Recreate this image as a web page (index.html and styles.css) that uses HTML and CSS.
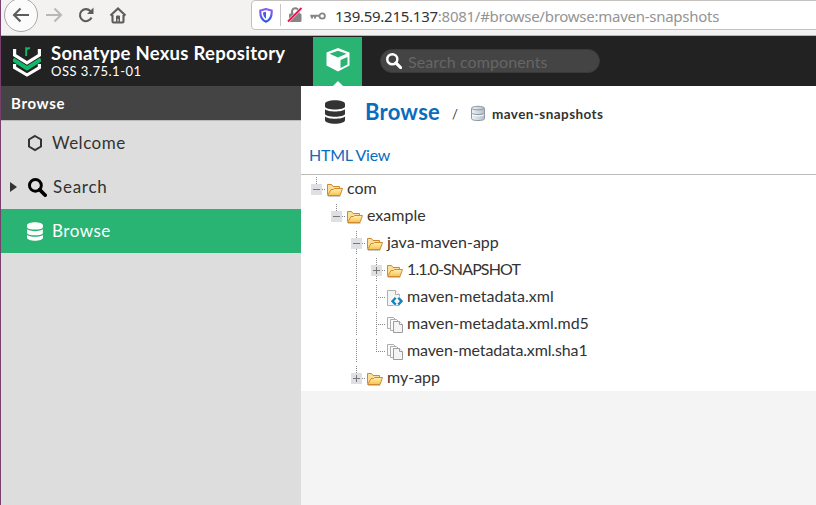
FILE: index.html
```html
<!DOCTYPE html>
<html lang="en">
<head>
<meta charset="utf-8">
<title>Browse - Sonatype Nexus Repository</title>
<link rel="stylesheet" href="styles.css">
</head>
<body>
<svg width="0" height="0" class="defs" aria-hidden="true">
  <defs>
    <linearGradient id="gold" x1="0" y1="0" x2="0" y2="1"><stop offset="0" stop-color="#fff0b4"/><stop offset="1" stop-color="#f9c34f"/></linearGradient>
    <linearGradient id="steel" x1="0" y1="0" x2="1" y2="0"><stop offset="0" stop-color="#eef2f6"/><stop offset="1" stop-color="#b4bfcb"/></linearGradient>
    <linearGradient id="shade" x1="0" y1="0" x2="0" y2="1"><stop offset="0" stop-color="#9059ff"/><stop offset="1" stop-color="#2a59dc"/></linearGradient>
    <symbol id="folder" viewBox="0 0 16 16">
      <path d="M.5 12.500V2.500h4l1.500 2h6.500v3" fill="#fbe09a" stroke="#ce8a2c"/>
      <path d="M.6 13.500 4 7.500H6.500l1-1h8L13 13.500z" fill="url(#gold)" stroke="#ce8a2c"/>
      <path d="M1 14.500h12.500" stroke="#b9b2a6" stroke-opacity=".7"/>
    </symbol>
    <symbol id="xml" viewBox="0 0 16 16">
      <path d="M.5.5h8l4 4v11H.5z" fill="#f4f4f4" stroke="#b0b0b0"/>
      <path d="M8.500.5v4h4" fill="#fff" stroke="#aaa"/>
      <path d="M8.500 7.500 5 11.200l3.500 3.700M11.500 7.500l3.500 3.700-3.500 3.700" fill="none" stroke="#fff" stroke-width="3.500"/>
      <path d="M8.700 7.800 5.500 11.200l3.200 3.400M11.300 7.800l3.200 3.400-3.200 3.400" fill="none" stroke="#1482bb" stroke-width="2.400"/>
    </symbol>
    <symbol id="files" viewBox="0 0 16 16">
      <path d="M.5.5h6l2 2v9h-8z" fill="#fafafa" stroke="#adadad"/>
      <path d="M3.500 2.500h6l2 2v9h-8z" fill="#fafafa" stroke="#adadad"/>
      <path d="M6.500 4.500h6l3 3v8h-9z" fill="#f4f4f4" stroke="#9d9d9d"/>
      <path d="M12.500 4.500v3h3" fill="#fff" stroke="#9d9d9d"/>
    </symbol>
    <symbol id="database" viewBox="0 0 20 24">
      <path d="M0 4c0-5 20-5 20 0v2.500c0 4-20 4-20 0zM0 9.300c3 3 17 3 20 0v4.500c0 4-20 4-20 0zM0 16.500c3 3 17 3 20 0V20c0 5-20 5-20 0z" fill="currentColor"/>
    </symbol>
    <symbol id="search" viewBox="0 0 18 18">
      <circle cx="7" cy="7" r="5.600" fill="none" stroke="currentColor" stroke-width="2.800"/>
      <path d="m11 11 5.300 5.300" stroke="currentColor" stroke-width="3.400" stroke-linecap="round"/>
    </symbol>
  </defs>
</svg>

<div class="window">
  <div class="toolbar">
    <span class="back"><svg width="18" height="16" viewBox="0 0 18 16"><path d="M17 8H2M8.500 1.500 2 8l6.500 6.500"/></svg></span>
    <svg class="forward" width="18" height="16" viewBox="0 0 18 16"><path d="M1 8h15M9.500 1.500 16 8l-6.500 6.500"/></svg>
    <svg class="reload" width="16" height="16" viewBox="0 0 16 16"><path d="M13.500 10.500A6 6 0 1 1 12.300 4l1 1"/><path class="solid" d="M15.500.5v6.500H9z"/></svg>
    <svg class="home" width="18" height="17" viewBox="0 0 18 17"><path d="M1.500 8.500 9 1.500l7.500 7M3.500 8v6.500q0 1 1 1h9q1 0 1-1V8"/><path class="solid" d="M7 15V9.500q0-1 1-1h2q1 0 1 1V15H9.500v-3h-1v3z"/></svg>
    <div class="address">
      <svg class="shield" width="14" height="15" viewBox="0 0 14 15"><path d="M7 1 12.700 2.500C13 8 11.500 11.800 7 13.700 2.500 11.800 1 8 1.300 2.500z" fill="none" stroke="url(#shade)" stroke-width="1.800"/><path d="M7 3.800v7C5 9.500 4 7.300 4 4.600z" fill="#4759e8"/></svg>
      <span class="divider"></span>
      <svg class="lock" width="16" height="16" viewBox="0 0 16 16"><path d="M5 7V4.500a3.300 3.300 0 0 1 6.600 0V7" fill="none" stroke="#858585"/><rect x="2" y="6.500" width="12.500" height="8.500" rx="1.300" fill="#858585"/><path class="gap" d="M1 14.500 14.500 1" stroke="#fff"/><path d="M1 14.500 14.500 1" stroke="#f4124e"/></svg>
      <svg class="key" width="16" height="8" viewBox="0 0 16 8"><circle cx="12.200" cy="4" r="2.700" fill="none" stroke="#858585" stroke-width="1.800"/><path d="M9.500 3.800H.3M2 4v2.500M5 4v2.500" fill="none" stroke="#858585"/></svg>
      <span class="url"><b>139.59.215.137</b>:8081/#browse/browse:maven-snapshots</span>
    </div>
  </div>

  <header class="header">
    <svg class="logo" width="28" height="31" viewBox="0 0 28 31"><g fill="none" stroke-width="3.200"><path d="M1.600 2v6L14 15.800 26.400 8V2" stroke="#fff"/><path d="M0 12.500 14 21.300 28 12.500" stroke="#0fba68" stroke-width="4"/><path d="M1.600 17v3.500L14 28l12.400-7.500V17" stroke="#fff"/><path d="M13.200 9V.3M13.200 4c0-2.300 1.300-3 3.800-2.700" stroke="#16b66b" stroke-width="1.900"/></g></svg>
    <div class="brand"><div class="product">Sonatype Nexus Repository</div><div class="version">OSS 3.75.1-01</div></div>
    <div class="mode">
      <svg width="26" height="26" viewBox="0 0 26 26"><path d="M13 1 24.500 5.500V18.500L13 24.500 1.500 18.500V5.500z" fill="#fff"/><path d="M4.500 6.700 13 3.800l8.500 2.900L13 10.500zM15.500 13l7-3v7.500l-7 3.500z" fill="#29b473"/></svg>
      <span class="notch"></span>
    </div>
    <div class="searchbox"><svg width="17" height="17"><use href="#search"/></svg><span>Search components</span></div>
  </header>

  <div class="body">
    <nav class="sidebar">
      <div class="side-title"><span>Browse</span></div>
      <div class="item"><svg class="hex" width="16" height="18" viewBox="0 0 16 18"><path d="m8 2 6 3.500v7L8 16l-6-3.500v-7z" fill="none" stroke="#333" stroke-width="2"/></svg><span>Welcome</span></div>
      <div class="item parent"><i class="caret"></i><svg class="glass" width="19" height="19"><use href="#search"/></svg><span>Search</span></div>
      <div class="item active"><svg class="db" width="16" height="19"><use href="#database"/></svg><span>Browse</span></div>
    </nav>

    <main class="main">
      <div class="crumbs">
        <svg class="db-title" width="20" height="24"><use href="#database"/></svg>
        <h1>Browse</h1>
        <span class="slash">/</span>
        <svg class="repo" width="16" height="17" viewBox="0 0 16 17"><path d="M1.500 3.200c0-2.500 13-2.500 13 0v10.500c0 2.500-13 2.500-13 0z" fill="url(#steel)" stroke="#8f9aa7"/><path d="M2 3.500c1 1.800 11 1.800 12 0M2 8.200c1 1.800 11 1.800 12 0" fill="none" stroke="#8f9aa7"/><path d="M2 9.500c1 1.800 11 1.800 12 0" fill="none" stroke="#fff"/></svg>
        <span class="repo-name">maven-snapshots</span>
      </div>
      <div class="view"><a>HTML View</a></div>
      <div class="tree">
        <div class="row"><i class="cell end"><b class="box"></b></i><svg class="ico"><use href="#folder"/></svg><span>com</span></div>
        <div class="row"><i class="cell"></i><i class="cell end"><b class="box"></b></i><svg class="ico"><use href="#folder"/></svg><span>example</span></div>
        <div class="row"><i class="cell"></i><i class="cell"></i><i class="cell tee"><b class="box"></b></i><svg class="ico"><use href="#folder"/></svg><span>java-maven-app</span></div>
        <div class="row"><i class="cell"></i><i class="cell"></i><i class="cell line"></i><i class="cell tee"><b class="box plus"></b></i><svg class="ico"><use href="#folder"/></svg><span class="release">1.1.0-SNAPSHOT</span></div>
        <div class="row"><i class="cell"></i><i class="cell"></i><i class="cell line"></i><i class="cell tee"></i><svg class="ico"><use href="#xml"/></svg><span>maven-metadata.xml</span></div>
        <div class="row"><i class="cell"></i><i class="cell"></i><i class="cell line"></i><i class="cell tee"></i><svg class="ico"><use href="#files"/></svg><span>maven-metadata.xml.md5</span></div>
        <div class="row"><i class="cell"></i><i class="cell"></i><i class="cell line"></i><i class="cell end"></i><svg class="ico"><use href="#files"/></svg><span class="checksum">maven-metadata.xml.sha1</span></div>
        <div class="row"><i class="cell"></i><i class="cell"></i><i class="cell end"><b class="box plus"></b></i><svg class="ico"><use href="#folder"/></svg><span>my-app</span></div>
      </div>
    </main>
  </div>
</div>
</body>
</html>
```

FILE: styles.css
```css
* { box-sizing: border-box; }
body { margin: 0; font-family: Lato, sans-serif; color: #333; overflow: hidden; }
.defs { position: absolute; }
svg { display: block; flex: none; }
span, h1 { white-space: nowrap; }
.window { display: flex; flex-direction: column; height: 505px; border-left: 1px solid #77406c; background: #f4f4f4; }

.toolbar { height: 36px; flex: none; display: flex; align-items: flex-start; background: #f3f2f1; border-bottom: 1px solid #b9b7b4; overflow: hidden; }
.toolbar path { fill: none; stroke-width: 2.100; }
.back { width: 34px; height: 34px; margin: -2px 0 0 3px; border: 1px solid #aaa8a6; border-radius: 50%; background: #fbfbfb; display: flex; align-items: center; justify-content: center; flex: none; }
.back path, .reload path, .home path { stroke: #5c5c5b; }
.forward { margin: 7px 0 0 7px; }
.forward path { stroke: #b9b8b7; }
.reload { margin: 7px 0 0 15px; }
.home { margin: 7px 0 0 15px; }
.toolbar path.solid { fill: #5c5c5b; stroke: none; }
.address { width: 580px; height: 30px; flex: none; margin-left: 124px; border: 1px solid #c4c1be; border-radius: 4px; background: #fff; display: flex; align-items: center; }
.shield { margin-left: 7px; }
.toolbar .shield path:last-child { fill: #4759e8; }
.divider { width: 1px; height: 22px; background: #c8c6c4; margin: 0 6px 0 7px; }
.key { margin: 1px 0 0 7px; }
.toolbar .lock .gap { stroke-width: 2.800; }
.toolbar .lock path:last-child { stroke-width: 1.900; }
.url { margin: 1px 0 0 9px; font: 15px/22px "Noto Sans", sans-serif; letter-spacing: -.26px; color: #949494; }
.url b { font-weight: 400; color: #333; }

.header { height: 50px; flex: none; display: flex; background: #222; color: #fff; }
.logo { margin: 11px 0 0 12px; }
.brand { width: 272px; padding-left: 10px; margin-top: 6px; }
.product { font: 700 18.500px/22px Lato, sans-serif; letter-spacing: .27px; white-space: nowrap; }
.version { font: 13px/15px Lato, sans-serif; letter-spacing: .5px; }
.mode { width: 49px; height: 49px; margin-top: 1px; background: #29b473; display: flex; flex-direction: column; align-items: center; justify-content: space-between; padding-top: 10px; flex: none; }
.notch { border: 5px solid transparent; border-top: 0; border-bottom-color: #fff; }
.searchbox { width: 220px; height: 24px; margin: 13px 0 0 18px; border: 1px solid #3a3a3a; border-radius: 12px; background: #444; color: #666; display: flex; align-items: center; gap: 5px; padding-left: 5px; font-size: 16px; letter-spacing: .1px; }
.searchbox svg { color: #fff; }
.searchbox use { transform: scale(.95); }

.body { flex: 1; display: flex; min-height: 0; }
.sidebar { width: 300px; background: #ddd; flex: none; }
.side-title { height: 35px; background: #444; border-bottom: 1px solid #bbb; color: #fff; font: 700 15px/35px Lato, sans-serif; letter-spacing: .65px; padding-left: 10px; }
.item { height: 44px; display: flex; align-items: center; padding-left: 26px; font-size: 17px; letter-spacing: .5px; }
.item span { line-height: 22px; }
.hex { margin-right: 9px; }
.parent { padding-left: 9px; letter-spacing: .75px; }
.caret { border: 5px solid transparent; border-left: 7px solid #333; border-right: 0; margin-right: 11px; }
.glass { color: #000; margin-right: 6px; }
.active { background: #29b473; color: #fff; }
.db { margin-right: 9px; }

.main { flex: 1; min-width: 0; }
.crumbs { height: 52px; background: #fff; display: flex; align-items: center; }
.db-title { margin-left: 24px; color: #333; }
h1 { margin: 0 0 0 20px; font: 700 22px/28px Lato, sans-serif; letter-spacing: .25px; color: #0b6bbd; width: 75px; }
.slash { margin: 3px 0 0 12px; font-size: 13px; width: 18px; }
.repo { margin-top: 2px; }
.repo-name { margin: 4px 0 0 6px; font: 700 13.500px/18px Lato, sans-serif; letter-spacing: .43px; }
.view { height: 37px; background: #fff; border-bottom: 1px solid #bbb; padding: 6px 0 0 8px; color: #0b6bbd; font-size: 16px; line-height: 22px; letter-spacing: -.25px; }
.tree { background: #fff; }
.row { height: 27px; display: flex; align-items: center; padding-left: 5px; }
.row span { font-size: 16px; line-height: 22px; margin: -2px 0 0 4px; }
.row .release { letter-spacing: -.88px; }
.row .checksum { letter-spacing: -.13px; }
.ico { width: 16px; height: 16px; margin-left: 1px; margin-top: 2px; }
.cell { width: 20px; height: 27px; flex: none; position: relative; }
.line::before, .tee::before, .end::before { content: ""; position: absolute; left: 10px; top: 2px; width: 1px; height: 23px; background: repeating-linear-gradient(#888 0 1px, transparent 1px 2px); }
.end::before { height: 13px; }
.tee::after, .end::after { content: ""; position: absolute; left: 10px; top: 14px; width: 9px; height: 1px; background: repeating-linear-gradient(90deg, #888 0 1px, transparent 1px 2px); }
.box { position: absolute; z-index: 1; left: 5px; top: 9px; width: 11px; height: 11px; background: linear-gradient(#777, #777) center / 7px 1px no-repeat #dfe0e4; }
.plus { background: linear-gradient(#777, #777) center / 7px 1px no-repeat, linear-gradient(#777, #777) center / 1px 7px no-repeat #dfe0e4; }
```
